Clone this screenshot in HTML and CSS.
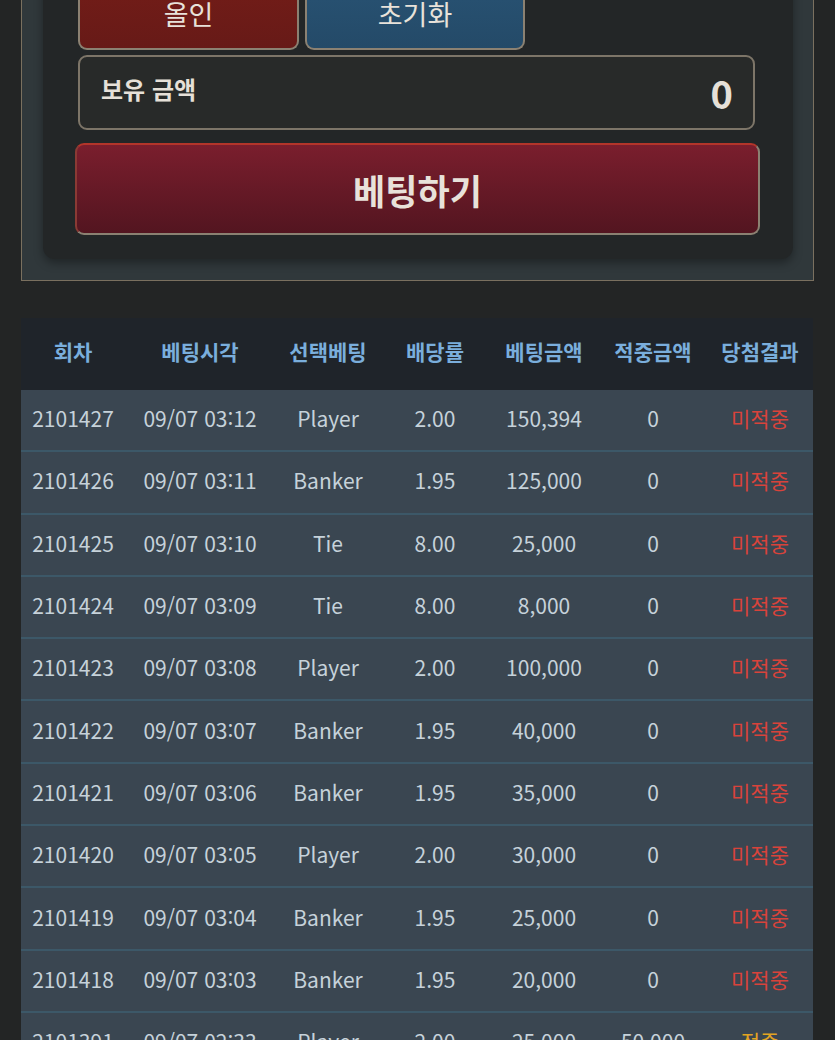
FILE: index.html
```html
<!DOCTYPE html>
<html lang="ko">
<head>
<meta charset="utf-8">
<title>베팅</title>
<link rel="stylesheet" href="styles.css">
</head>
<body>
<div class="panel">
  <div class="card">
    <div class="quick">
      <button class="qbtn allin">올인</button>
      <button class="qbtn reset">초기화</button>
    </div>
    <div class="balance">
      <span class="balance-label">보유 금액</span>
      <span class="balance-value">0</span>
    </div>
    <button class="bet-btn">베팅하기</button>
  </div>
</div>

<table class="history">
  <thead>
    <tr>
      <th class="c1">회차</th>
      <th class="c2">베팅시각</th>
      <th class="c3">선택베팅</th>
      <th class="c4">배당률</th>
      <th class="c5">베팅금액</th>
      <th class="c6">적중금액</th>
      <th class="c7">당첨결과</th>
    </tr>
  </thead>
  <tbody>
    <tr><td>2101427</td><td>09/07 03:12</td><td>Player</td><td>2.00</td><td>150,394</td><td>0</td><td class="lose">미적중</td></tr>
    <tr><td>2101426</td><td>09/07 03:11</td><td>Banker</td><td>1.95</td><td>125,000</td><td>0</td><td class="lose">미적중</td></tr>
    <tr><td>2101425</td><td>09/07 03:10</td><td>Tie</td><td>8.00</td><td>25,000</td><td>0</td><td class="lose">미적중</td></tr>
    <tr><td>2101424</td><td>09/07 03:09</td><td>Tie</td><td>8.00</td><td>8,000</td><td>0</td><td class="lose">미적중</td></tr>
    <tr><td>2101423</td><td>09/07 03:08</td><td>Player</td><td>2.00</td><td>100,000</td><td>0</td><td class="lose">미적중</td></tr>
    <tr><td>2101422</td><td>09/07 03:07</td><td>Banker</td><td>1.95</td><td>40,000</td><td>0</td><td class="lose">미적중</td></tr>
    <tr><td>2101421</td><td>09/07 03:06</td><td>Banker</td><td>1.95</td><td>35,000</td><td>0</td><td class="lose">미적중</td></tr>
    <tr><td>2101420</td><td>09/07 03:05</td><td>Player</td><td>2.00</td><td>30,000</td><td>0</td><td class="lose">미적중</td></tr>
    <tr><td>2101419</td><td>09/07 03:04</td><td>Banker</td><td>1.95</td><td>25,000</td><td>0</td><td class="lose">미적중</td></tr>
    <tr><td>2101418</td><td>09/07 03:03</td><td>Banker</td><td>1.95</td><td>20,000</td><td>0</td><td class="lose">미적중</td></tr>
    <tr><td>2101391</td><td>09/07 02:33</td><td>Player</td><td>2.00</td><td>25,000</td><td>50,000</td><td class="win">적중</td></tr>
    <tr><td>2101390</td><td>09/07 02:32</td><td>Banker</td><td>1.95</td><td>20,000</td><td>0</td><td class="lose">미적중</td></tr>
  </tbody>
</table>
</body>
</html>
```

FILE: styles.css
```css
html, body {
  margin: 0;
  padding: 0;
  background: #232525;
  font-family: "Noto Sans CJK KR", "Noto Sans", sans-serif;
  color: #e6e0d8;
  overflow: hidden;
}

.panel {
  margin: -80px 21px 0 21px;
  border: 1px solid #7a705f;
  border-top: none;
  background: #30383b;
  padding: 0 20px 21px 21px;
}

.card {
  background: #232627;
  border-radius: 0 0 12px 12px;
  box-shadow: 0 4px 10px rgba(0, 0, 0, 0.35);
  padding: 0 38px 24px 35px;
}

.quick {
  display: flex;
  gap: 6px;
}

.qbtn {
  width: 221px;
  height: 130px;
  padding: 58px 0 0 0;
  border: 2px solid #8b8172;
  border-top: none;
  border-radius: 0 0 9px 9px;
  font-family: inherit;
  font-size: 27px;
  color: #e8e2da;
  line-height: 1;
}

.allin {
  background: linear-gradient(#7e1f19, #671a17);
}

.reset {
  width: 220px;
  background: linear-gradient(#2c5a7d, #244a68);
}

.balance {
  margin-top: 5px;
  height: 75px;
  box-sizing: border-box;
  border: 2px solid #7d7568;
  border-radius: 9px;
  background: #282a29;
  display: flex;
  align-items: center;
  justify-content: space-between;
  padding: 0 20px 0 21px;
}

.balance-label {
  font-size: 24px;
  font-weight: 700;
  color: #e6e0d8;
  margin-bottom: 9px;
}

.balance-value {
  font-size: 38px;
  font-weight: 700;
  color: #e6e0d8;
  line-height: 1;
}

.bet-btn {
  display: block;
  margin: 13px -5px 0 -3px;
  width: calc(100% + 8px);
  height: 92px;
  border: 2px solid #8b8172;
  border-top-color: #b3352a;
  border-left-color: #8a3a34;
  border-radius: 9px;
  background: linear-gradient(#7a1e2d, #531520);
  font-family: inherit;
  font-size: 35px;
  font-weight: 700;
  color: #e8e2da;
}

.history {
  margin: 37px 21px 0 21px;
  width: 792px;
  border-collapse: collapse;
  table-layout: fixed;
}

.history th {
  height: 66px;
  padding: 0 0 6px 0;
  background: #1f242a;
  color: #7aaedc;
  font-size: 21px;
  font-weight: 700;
  text-align: center;
}

.c1 { width: 104px; }
.c2 { width: 150px; }
.c3 { width: 106px; }
.c4 { width: 108px; }
.c5 { width: 110px; }
.c6 { width: 108px; }
.c7 { width: 106px; }

.history td {
  height: 56.3px;
  padding: 0 0 4px 0;
  background: #3a4651;
  border-bottom: 2px solid #3c5868;
  color: #c6d2da;
  font-size: 21px;
  text-align: center;
  white-space: nowrap;
}

.history td.lose { color: #d8433b; }
.history td.win { color: #e2a422; }
```
